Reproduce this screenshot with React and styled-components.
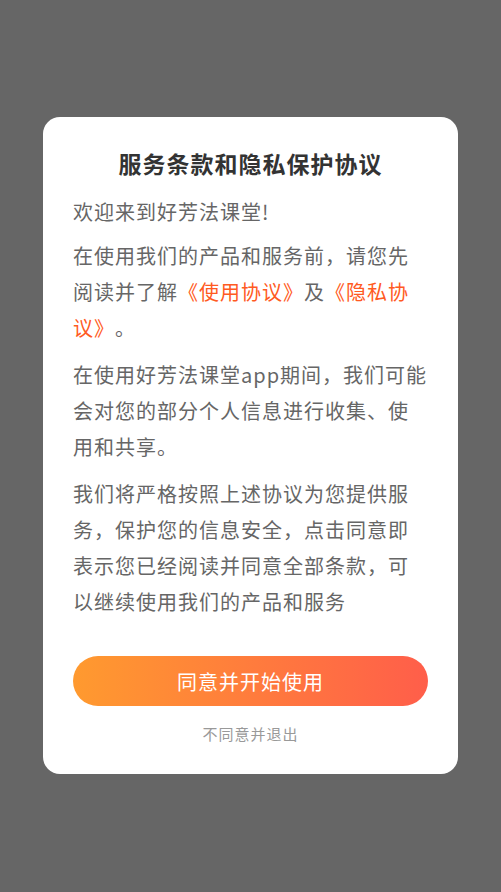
import React from "react";
import styled, { createGlobalStyle } from "styled-components";

const GlobalStyle = createGlobalStyle`
  html, body {
    margin: 0;
    padding: 0;
    background: #666666;
  }
  body {
    font-family: "Noto Sans CJK SC", "Noto Sans", sans-serif;
  }
`;

const Page = styled.div`
  min-height: 892px;
  box-sizing: border-box;
  padding: 117px 43px 0;
  background: #666666;
`;

const Card = styled.div`
  background: #ffffff;
  border-radius: 17px;
  padding: 31px 30px 29px;
  display: flex;
  flex-direction: column;
`;

const Title = styled.h2`
  margin: 0 0 16px;
  font-size: 23px;
  line-height: 30px;
  font-weight: 700;
  letter-spacing: 1px;
  color: #333333;
  text-align: center;
`;

const Para = styled.p`
  margin: 0 0 ${(p) => p.$gap || 11}px;
  font-size: 20px;
  line-height: 36px;
  letter-spacing: 1px;
  color: #666666;
  text-spacing-trim: space-all;
  &:last-of-type {
    margin-bottom: 0;
  }
`;

const Link = styled.span`
  color: #ff5a22;
`;

const AgreeButton = styled.button`
  margin-top: 36px;
  height: 50px;
  border: none;
  border-radius: 25px;
  background: linear-gradient(90deg, #ff9a2f 0%, #ff5e4a 100%);
  color: #ffffff;
  font-family: inherit;
  font-size: 20px;
  letter-spacing: 1px;
  cursor: pointer;
`;

const Decline = styled.div`
  margin-top: 17px;
  font-size: 15px;
  line-height: 22px;
  letter-spacing: 1px;
  color: #999999;
  text-align: center;
`;

export default function App() {
  return (
    <Page>
      <GlobalStyle />
      <Card>
        <Title>服务条款和隐私保护协议</Title>
        <Para $gap={8}>欢迎来到好芳法课堂!</Para>
        <Para>
          在使用我们的产品和服务前，请您先阅读并了解
          <Link>《使用协议》</Link>及<Link>《隐私协议》</Link>。
        </Para>
        <Para>
          在使用好芳法课堂app期间，我们可能会对您的部分个人信息进行收集、使用和共享。
        </Para>
        <Para>
          我们将严格按照上述协议为您提供服务，保护您的信息安全，点击同意即表示您已经阅读并同意全部条款，可以继续使用我们的产品和服务
        </Para>
        <AgreeButton>同意并开始使用</AgreeButton>
        <Decline>不同意并退出</Decline>
      </Card>
    </Page>
  );
}
